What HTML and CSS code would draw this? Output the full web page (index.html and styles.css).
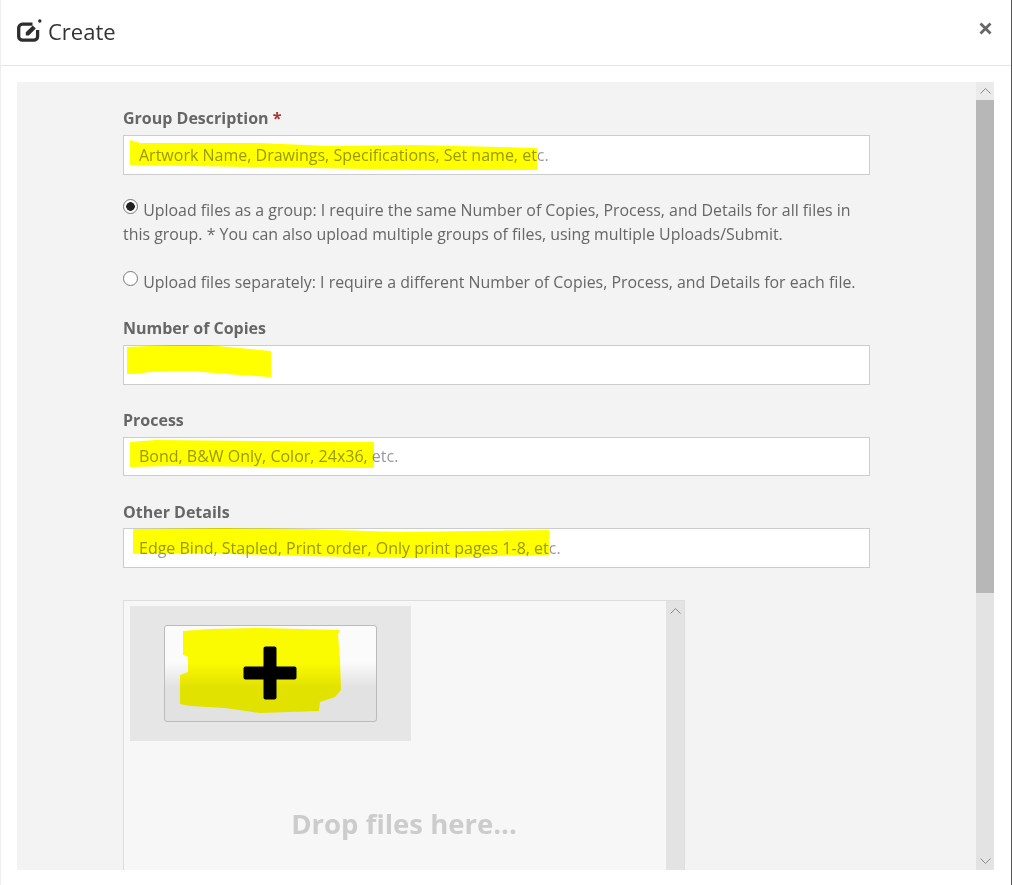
FILE: index.html
```html
<!DOCTYPE html>
<html lang="en">
<head>
<meta charset="utf-8">
<title>Create</title>
<link rel="stylesheet" href="styles.css">
</head>
<body>
<div class="modal">
  <header class="modal-head">
    <h1 class="modal-title">
      <svg class="title-icon" viewBox="0 0 25 23" width="25" height="23" aria-hidden="true">
        <path d="M15.500 5.200H5.500A3.800 3.800 0 0 0 1.700 9v8.400a3.800 3.800 0 0 0 3.800 3.800h11.300a3.800 3.800 0 0 0 3.800-3.800V11" fill="none" stroke="#2d2d2d" stroke-width="3.300"/>
        <path d="M8.800 13.300 15.800 6.400l3 3-7 7H8.800z" fill="#2d2d2d"/>
        <circle cx="22.800" cy="2" r="1.700" fill="#2d2d2d"/>
      </svg>
      <span>Create</span>
    </h1>
    <button class="close" type="button" aria-label="Close">
      <svg viewBox="0 0 13 13" width="13" height="13" aria-hidden="true"><path d="M1.500 1.500l10 10M11.500 1.500l-10 10" stroke="#666" stroke-width="2.800" fill="none"/></svg>
    </button>
  </header>
  <div class="modal-body">
    <div class="panel">
      <form class="form">
        <div class="field field-first">
          <label class="label">Group Description <span class="req">*</span></label>
          <input class="input" type="text" placeholder="Artwork Name, Drawings, Specifications, Set name, etc.">
        </div>
        <div class="choice choice-first">
          <span class="radio radio-on"></span> Upload files as a group: I require the same Number of Copies, Process, and Details for all files in this group. * You can also upload multiple groups of files, using multiple Uploads/Submit.
        </div>
        <div class="choice">
          <span class="radio"></span> Upload files separately: I require a different Number of Copies, Process, and Details for each file.
        </div>
        <div class="field">
          <label class="label">Number of Copies</label>
          <input class="input" type="text">
        </div>
        <div class="field field-tight">
          <label class="label">Process</label>
          <input class="input" type="text" placeholder="Bond, B&amp;W Only, Color, 24x36, etc.">
        </div>
        <div class="field field-low">
          <label class="label label-low">Other Details</label>
          <input class="input" type="text" placeholder="Edge Bind, Stapled, Print order, Only print pages 1-8, etc.">
        </div>
        <div class="drop">
          <div class="drop-main">
            <div class="add-tile">
              <button class="add-btn" type="button" aria-label="Add files">
                <svg viewBox="0 0 54 54" width="54" height="54" aria-hidden="true"><path d="M20.500 2.500a2 2 0 0 1 2-2h9a2 2 0 0 1 2 2v18h18a2 2 0 0 1 2 2v9a2 2 0 0 1-2 2h-18v18a2 2 0 0 1-2 2h-9a2 2 0 0 1-2-2v-18h-18a2 2 0 0 1-2-2v-9a2 2 0 0 1 2-2h18z" fill="#000"/></svg>
              </button>
            </div>
            <div class="drop-text">Drop files here...</div>
          </div>
          <div class="mini-bar">
            <svg class="arrow" viewBox="0 0 11 6" width="11" height="6" aria-hidden="true"><path d="M.5 5.500 5.500.5l5 5" fill="none" stroke="#8a8a8a"/></svg>
          </div>
        </div>
      </form>
      <div class="scrollbar">
        <div class="sb-btn sb-btn-up"><svg viewBox="0 0 11 6" width="11" height="6" aria-hidden="true"><path d="M.5 5.500 5.500.5l5 5" fill="none" stroke="#8a8a8a"/></svg></div>
        <div class="sb-thumb"></div>
        <div class="sb-track"></div>
        <div class="sb-btn"><svg viewBox="0 0 11 6" width="11" height="6" aria-hidden="true"><path d="M.5.5l5 5 5-5" fill="none" stroke="#8a8a8a"/></svg></div>
      </div>
    </div>
  </div>
</div>
<svg class="marker" viewBox="0 0 1012 885" width="1012" height="885" aria-hidden="true">
  <path class="ink" d="M130 140 140 143 260 143 330 146 415 145 537 148 537 170 420 170 250 167 130 165z"/>
  <path class="ink" d="M127 347 170 345 207 345 250 349 271 351 271 377 240 375 190 371 150 372 135 374 127 374z"/>
  <path class="ink" d="M130 442 155 440 263 441 335 442 374 442 374 468 350 468 270 467 170 466 130 467z"/>
  <path class="ink" d="M133 529 225 528 307 529 400 532 549 530 549 555 500 556 415 558 300 556 200 553 133 554z"/>
  <path class="ink" d="M183 631 210 629 260 628 340 630 338 634 340 660 341 690 335 697 320 702 319 711 260 713 225 708 190 706 180 704 180 675 188 672 188 657 183 655z"/>
</svg>
</body>
</html>
```
FILE: styles.css
```css
* { box-sizing: border-box; }
html, body { margin: 0; height: 885px; overflow: hidden; background: #fff; }
body { font-family: "Open Sans", "Liberation Sans", sans-serif; color: #666; position: relative; }
.modal { height: 885px; display: flex; flex-direction: column; border-left: 1px solid #eee; border-right: 1px solid #555; }
.modal-head { height: 66px; flex: none; display: flex; align-items: center; justify-content: space-between; padding: 0 19px 4px 16px; border-bottom: 1px solid #e5e5e5; }
.modal-title { margin: 0; display: flex; align-items: center; gap: 6px; font-size: 22px; font-weight: 400; color: #333; }
.title-icon { display: block; }
.close { border: 0; background: none; padding: 0; display: block; height: 13px; margin-top: -5px; }
.close svg { display: block; }
.modal-body { flex: 1; min-height: 0; padding: 16px 17px 15px 16px; }
.panel { height: 100%; display: flex; background: #f3f3f3; overflow: hidden; }
.form { flex: 1; min-width: 0; padding: 0 106px 0 106px; font-size: 16px; }
.field { margin-top: 22px; }
.field-first { margin-top: 24px; }
.field-tight { margin-top: 23px; }
.field-low { margin-top: 24px; }
.label { display: block; font-weight: 700; font-size: 16px; line-height: 24px; margin-bottom: 5px; color: #666; }
.label-low { margin-bottom: 4px; }
.req { color: #a33; }
.input { display: block; width: 100%; height: 39.500px; padding: 0 15px; border: 1px solid #ccc; border-radius: 0; background: #fff; font: 16px "Open Sans", sans-serif; color: #555; outline: 0; }
.input::placeholder { color: #999; opacity: 1; }
.choice { margin-top: 24px; line-height: 24px; font-size: 15.920px; color: #666; }
.choice-first { margin-top: 23.500px; }
.radio { display: inline-block; width: 15px; height: 15px; margin-right: 1px; border: 1px solid #777; border-radius: 50%; background: #fff; vertical-align: 2px; }
.radio-on { background: radial-gradient(circle, #222 0 4px, #fff 4.600px); }
.drop { margin-top: 32.500px; width: 562px; height: 400px; display: flex; border: 1px solid #ddd; background: #f7f7f7; }
.drop-main { flex: 1; padding: 5px 6px; min-width: 0; }
.add-tile { width: 281px; height: 135px; background: #e6e6e6; padding-top: 19px; display: flex; justify-content: center; align-items: flex-start; }
.add-btn { width: 213px; height: 97px; padding: 0 2px 2px 0; display: flex; align-items: center; justify-content: center; border: 1px solid #bbb; border-radius: 3px; background: linear-gradient(#fbfbfb 0 38%, #e2e2e2 64%); }
.add-btn svg { display: block; }
.drop-text { margin-top: 63px; padding-left: 18px; text-align: center; font-size: 27.500px; font-weight: 700; line-height: 40px; color: #ccc; }
.mini-bar { width: 18px; flex: none; background: #e3e3e3; text-align: center; padding-top: 7px; }
.arrow { display: block; margin: 0 auto; }
.scrollbar { width: 18px; flex: none; display: flex; flex-direction: column; background: #e3e3e3; }
.sb-btn { height: 18px; flex: none; display: flex; align-items: center; justify-content: center; }
.sb-btn-up { background: #ebebeb; }
.sb-thumb { height: 493px; flex: none; background: #b7b7b7; }
.sb-track { flex: 1; }
.marker { position: absolute; left: 0; top: 0; pointer-events: none; mix-blend-mode: multiply; }
.ink { fill: #ffff00; }
```
